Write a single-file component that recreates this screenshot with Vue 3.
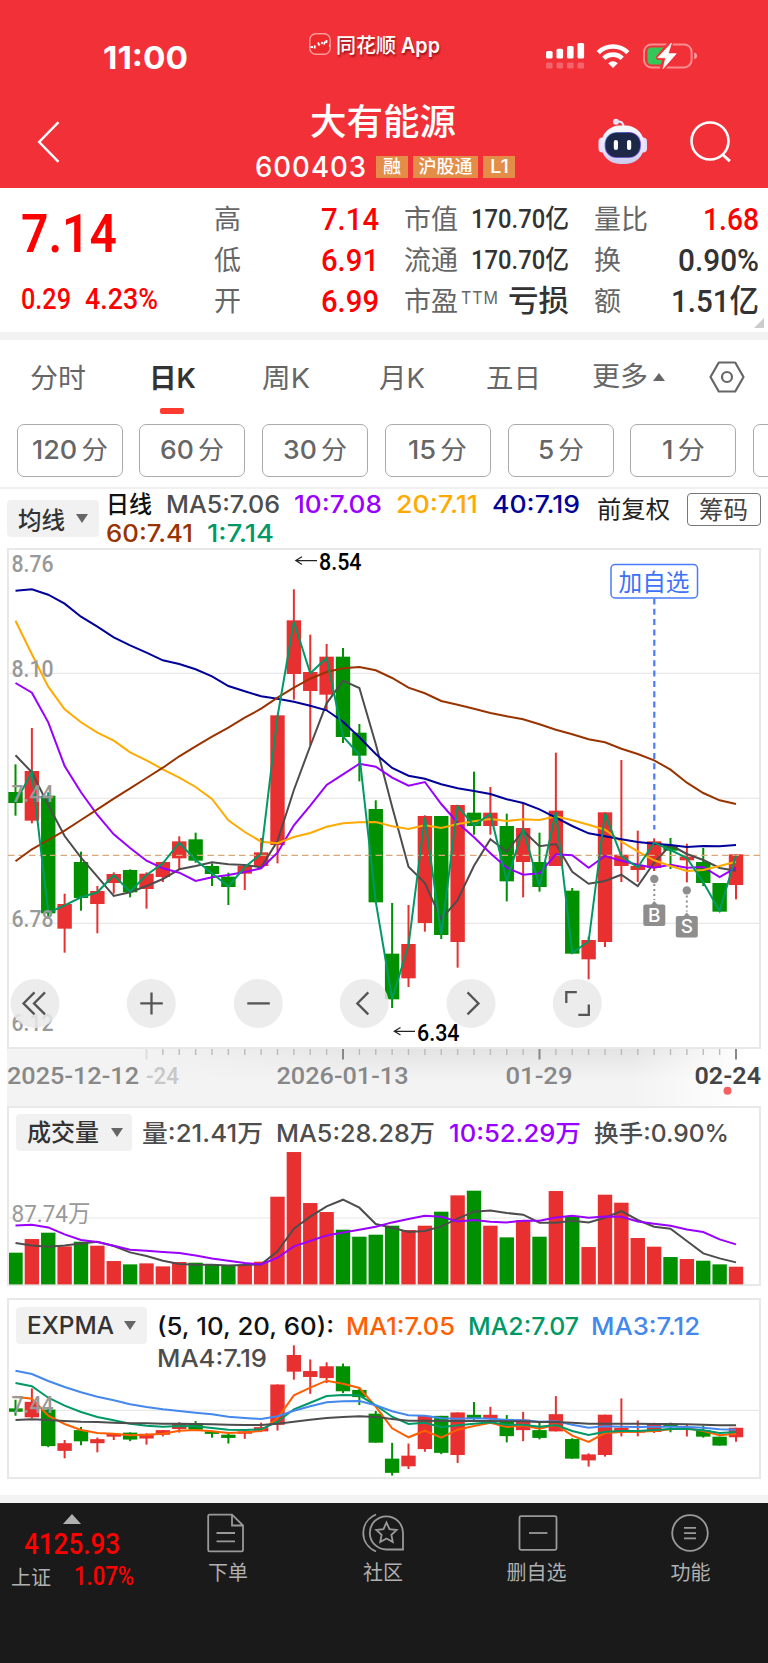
<template>
  <div class="page">
    <!-- 顶部红色区域 -->
    <header class="top">
      <div class="status">
        <span class="time" v-fit="85">11:00</span>
        <div class="app-mark">
          <svg width="22" height="22" viewBox="0 0 22 22">
            <rect x="0.8" y="0.8" width="20.4" height="20.4" rx="6" fill="#ec2a2c" stroke="#ff9a9c" stroke-width="1.4" />
            <path d="M1.5 14h2.5M5.5 15.5l.5-3M9 9.5l1.5 3M12.5 11l1-2M15 11.5l1-3M17.5 7v3M20 12.5h1" stroke="#fff" stroke-width="1.8" fill="none" />
          </svg>
          <span class="app-cn" v-fit="60">同花顺</span>
          <span class="app-en" v-fit="39">App</span>
        </div>
        <div class="status-icons">
          <svg width="40" height="28" viewBox="0 0 40 28" fill="#fff">
            <rect x="1" y="9" width="6.6" height="7.5" rx="1.5" />
            <rect x="11.5" y="6.8" width="6.6" height="9.7" rx="1.5" />
            <rect x="22" y="4" width="6.6" height="12.5" rx="1.5" />
            <rect x="32.5" y="1" width="6.6" height="15.5" rx="1.5" />
            <g opacity="0.25">
              <rect x="1" y="20.5" width="6.6" height="6" rx="1.5" />
              <rect x="11.5" y="20.5" width="6.6" height="6" rx="1.5" />
              <rect x="22" y="20.5" width="6.6" height="6" rx="1.5" />
              <rect x="32.5" y="20.5" width="6.6" height="6" rx="1.5" />
            </g>
          </svg>
          <svg class="wifi" width="34" height="26" viewBox="0 0 34 26" fill="none" stroke="#fff" stroke-width="4.6">
            <path d="M2.2 9.6a21 21 0 0 1 29.6 0" />
            <path d="M7.8 15.4a13 13 0 0 1 18.4 0" />
            <path d="M12.2 20.2a6.8 6.8 0 0 1 9.6 0L17 25z" fill="#fff" stroke="none" />
          </svg>
          <svg class="battery" width="56" height="28" viewBox="0 0 56 28">
            <rect x="1" y="2.4" width="47.6" height="23" rx="7.5" fill="none" stroke="#fff" stroke-opacity="0.45" stroke-width="2" />
            <path d="M51.2 10.6q3 1 3 3.3t-3 3.3z" fill="#fff" fill-opacity="0.5" />
            <path d="M8.5 5.4H21v17H8.5q-4 0-4-4v-9q0-4 4-4z" fill="#34c759" />
            <path d="M27.5 1L15.5 15.5h7L19.5 26.5 33 11.5h-7.5z" fill="#fff" stroke="#f23038" stroke-width="5" stroke-linejoin="round" />
            <path d="M28.3 1.2L14.8 15.7h8L20 26.7 33.2 11.7h-8z" fill="#fff" stroke="#fff" stroke-width="0.8" stroke-linejoin="round" />
          </svg>
        </div>
      </div>
      <div class="nav">
        <svg class="back" width="24" height="42" viewBox="0 0 24 42" fill="none" stroke="#fff" stroke-width="2.4">
          <path d="M21.5 1.2L2.2 21l19.3 19.8" />
        </svg>
        <div class="title">
          <h1 v-fit="146">大有能源</h1>
          <div class="code">
            <span class="num" v-fit="112">600403</span>
            <i class="tag"><b v-fit="18">融</b></i>
            <i class="tag wide"><b v-fit="54">沪股通</b></i>
            <i class="tag"><b v-fit="19">L1</b></i>
          </div>
        </div>
        <div class="nav-right">
          <svg width="50" height="48" viewBox="0 0 50 48">
            <defs>
              <linearGradient id="shell" x1="0" y1="0" x2="0" y2="1">
                <stop offset="0" stop-color="#fafaff" />
                <stop offset="0.6" stop-color="#e6e6fa" />
                <stop offset="1" stop-color="#c9c9ee" />
              </linearGradient>
              <linearGradient id="rim" x1="0" y1="0" x2="1" y2="1">
                <stop offset="0" stop-color="#58c8e8" />
                <stop offset="0.4" stop-color="#7d3fe0" />
                <stop offset="1" stop-color="#8a7cf0" />
              </linearGradient>
            </defs>
            <path d="M18.5 3.6q7-1.2 7 5.5" fill="none" stroke="#e9e7fa" stroke-width="2" />
            <circle cx="18" cy="3.8" r="3" fill="#e4e2f8" />
            <rect x="0.5" y="19.5" width="8" height="15" rx="4" fill="#e2e0f8" />
            <rect x="41" y="19.5" width="8" height="15" rx="4" fill="#e2e0f8" />
            <rect x="3.2" y="7.5" width="43" height="38.500" rx="18.5" fill="url(#shell)" />
            <rect x="6.6" y="14" width="36.400" height="26" rx="12" fill="url(#rim)" />
            <rect x="7.5" y="14.8" width="34.600" height="24.500" rx="11.3" fill="#1d2748" />
            <rect x="15.800" y="22" width="4.200" height="10" rx="2" fill="#fff" />
            <rect x="29" y="22" width="4.200" height="10" rx="2" fill="#fff" />
          </svg>
          <svg width="42" height="42" viewBox="0 0 42 42" fill="none" stroke="#fff" stroke-width="2.6">
            <circle cx="20" cy="20" r="18.5" />
            <path d="M32.5 33.5l7.300 6.700" stroke-width="3" />
          </svg>
        </div>
      </div>
    </header>

    <!-- 行情数据 -->
    <section class="quote">
      <div class="main">
        <div class="price"><span v-fit="96">7.14</span></div>
        <div class="change"><span v-fit="50">0.29</span><span v-fit="73">4.23%</span></div>
      </div>
      <div class="col" v-for="(col, c) in stats" :key="c">
        <div class="stat" v-for="s in col" :key="s.k">
          <span class="k">{{ s.k }}<sup v-if="s.sup" v-fit="38">{{ s.sup }}</sup></span>
          <span class="v" :class="s.cls" v-fit="s.w">{{ s.v }}</span>
        </div>
      </div>
      <i class="corner"></i>
    </section>

    <!-- 周期 -->
    <nav class="tabs">
      <span v-for="t in tabs" :key="t.n" :class="{ on: t.on }"><b v-fit="t.w">{{ t.n }}</b></span>
      <span class="more"><b v-fit="56">更多</b><i></i></span>
      <svg width="36" height="32" viewBox="0 0 36 32" fill="none" stroke="#666" stroke-width="2.2">
        <path d="M9.800 1.500h16.400L34.500 16l-8.300 14.500H9.800L1.500 16z" stroke-linejoin="round" />
        <circle cx="18" cy="16" r="5" />
      </svg>
    </nav>
    <div class="minutes">
      <button v-for="m in minutes" :key="m.n"><span v-fit="m.w">{{ m.n }}<em>分</em></span></button>
      <button></button>
    </div>

    <!-- 均线图例 -->
    <div class="legend">
      <div class="pill"><span v-fit="47">均线</span><i></i></div>
      <div class="ma">
        <div>
          <span v-for="m in maRow1" :key="m.t" :style="{ color: m.c }" v-fit="m.w">{{ m.t }}</span>
        </div>
        <div>
          <span v-for="m in maRow2" :key="m.t" :style="{ color: m.c }" v-fit="m.w">{{ m.t }}</span>
        </div>
      </div>
      <span class="adjust" v-fit="73">前复权</span>
      <button class="chips">筹码</button>
    </div>

    <!-- K线主图 -->
    <svg class="chart" width="768" height="501" viewBox="0 0 768 501">
      <rect class="frame" x="8" y="1" width="752" height="499" />
      <path class="grid" d="M8 125.400H760M8 250.400H760M8 375.400H760" />
      <g v-for="(k, i) in candles" :key="i" :fill="k.color">
        <rect :x="x(i) - 1" :y="py(k.h)" width="2" :height="(k.l - k.h) / 3" />
        <rect :x="x(i) - 7.2" :y="py(k.t)" width="14.4" :height="(k.b - k.t) / 3" />
      </g>
      <path class="last" d="M8 307.400H760" />
      <polyline v-for="l in kLines" :key="l.color" class="line" :stroke="l.color" :points="points(l.data, py)" />
      <text v-for="t in axis" :key="t.v" class="scale" x="11.5" :y="t.y" textLength="42" lengthAdjust="spacingAndGlyphs">{{ t.v }}</text>

      <g class="mark">
        <path d="M317 12.600H296M302 8.800L295.800 12.600 302 16.400" />
        <text x="319" y="22.2" textLength="42.5" lengthAdjust="spacingAndGlyphs">8.54</text>
        <path d="M415 483.300H394.500M400.500 479.500L394.300 483.300 400.500 487.100" />
        <text x="417" y="492.500" textLength="42.5" lengthAdjust="spacingAndGlyphs">6.34</text>
      </g>

      <g class="fav">
        <rect x="611" y="16.5" width="86.500" height="33.500" rx="4" />
        <text x="618.5" y="43" textLength="71" lengthAdjust="spacingAndGlyphs">加自选</text>
        <path d="M654.300 50.500V281.500" />
      </g>
      <g v-for="d in deals" :key="d.n" class="deal" :transform="`translate(${d.x} ${d.y})`">
        <circle r="4.2" />
        <path class="dots" d="M0 5V21" />
        <path d="M-3.500 26L0 22 3.500 26z" />
        <rect x="-11" y="25.500" width="22" height="21.500" rx="2" />
        <text y="43">{{ d.n }}</text>
      </g>

      <g v-for="b in tools" :key="b.x" :transform="`translate(${b.x} 455.400)`">
        <circle r="24.5" fill="#e9e9e9" fill-opacity="0.85" />
        <path class="glyph" :d="b.d" />
      </g>
    </svg>

    <!-- 时间轴 -->
    <svg class="dates" width="768" height="57" viewBox="0 0 768 57">
      <defs>
        <linearGradient id="shade" x1="0" y1="0" x2="0" y2="1">
          <stop offset="0" stop-color="#e4e4e4" />
          <stop offset="0.55" stop-color="#f3f3f3" />
        </linearGradient>
        <linearGradient id="fadeL" x1="0" x2="1">
          <stop offset="0.17" stop-color="#f3f3f3" />
          <stop offset="0.5" stop-color="#f3f3f3" stop-opacity="0" />
        </linearGradient>
        <linearGradient id="fadeR" x1="0" x2="1">
          <stop offset="0.82" stop-color="#fff" stop-opacity="0" />
          <stop offset="0.97" stop-color="#fff" />
        </linearGradient>
      </defs>
      <rect x="7" width="754" height="57" fill="url(#shade)" />
      <rect x="7" width="754" height="57" fill="url(#fadeL)" />
      <rect x="7" width="761" height="57" fill="url(#fadeR)" />
      <g v-for="i in ticks" :key="i">
        <rect
          :x="x(i) - (i % 12 === 8 ? 1 : 0.7)"
          :width="i % 12 === 8 ? 2 : 1.4"
          :height="i % 12 === 8 ? 10.5 : 6"
          :fill="i === 8 ? '#ddd' : i % 12 === 8 ? '#888' : '#bbb'"
        />
      </g>
      <text v-for="d in dates" :key="d.v" :class="d.cls" :x="d.x" y="35.2" :textLength="d.w" lengthAdjust="spacingAndGlyphs">{{ d.v }}</text>
      <circle cx="727.5" cy="41.7" r="4" fill="#f55f5f" />
    </svg>

    <!-- 成交量 -->
    <section class="panel volume">
      <div class="head">
        <div class="pill"><span v-fit="72">成交量</span><i></i></div>
        <span v-for="m in volHead" :key="m.t" :style="{ color: m.c }" v-fit="m.w">{{ m.t }}</span>
      </div>
      <svg width="750" height="134" viewBox="9 0 750 134">
        <path class="grid" d="M8 67H760" />
        <text class="scale" x="11.5" y="70.500" textLength="79" lengthAdjust="spacingAndGlyphs">87.74万</text>
        <rect v-for="(k, i) in candles" :key="i" :x="x(i) - 7.2" :y="vy(volumes[i])" width="14.4" :height="(434 - volumes[i]) / 3" :fill="k.color" />
        <polyline v-for="l in vLines" :key="l.color" class="line" :stroke="l.color" :points="points(l.data, vy)" />
      </svg>
    </section>

    <!-- EXPMA -->
    <section class="panel expma">
      <div class="head">
        <div class="pill"><span v-fit="87">EXPMA</span><i></i></div>
        <span v-for="m in expHead" :key="m.t" :style="{ color: m.c }" v-fit="m.w">{{ m.t }}</span>
      </div>
      <div class="head second"><span v-fit="110">MA4:7.19</span></div>
      <svg width="750" height="132" viewBox="9 0 750 132">
        <path class="grid" d="M8 65.400H760" />
        <g v-for="(k, i) in candles" :key="i" :fill="k.color">
          <rect :x="x(i) - 1" :y="ey(small(k.h))" width="2" :height="(k.l - k.h) * 0.1037" />
          <rect :x="x(i) - 7.2" :y="ey(small(k.t))" width="14.4" :height="(k.b - k.t) * 0.1037" />
        </g>
        <polyline v-for="l in eLines" :key="l.color" class="line" :stroke="l.color" :points="points(l.data, ey)" />
        <text class="scale" x="11.5" y="68.300" textLength="42" lengthAdjust="spacingAndGlyphs">7.44</text>
      </svg>
    </section>

    <!-- 底部栏 -->
    <footer class="bar">
      <div class="index">
        <i></i>
        <div class="pt"><span v-fit="96">4125.93</span></div>
        <div class="row"><span class="nm">上证</span><span class="pc" v-fit="60">1.07%</span></div>
      </div>
      <div class="item order">
        <svg width="40" height="40" viewBox="0 0 40 40">
          <path d="M3.500 1.700H26L37 12.500V37q0 1.300-1.300 1.300H3.500q-1.300 0-1.300-1.300V3q0-1.300 1.300-1.300zM26 1.700V12.500H37M10.500 20H29M10.500 28.300H29" />
        </svg>
        <span>下单</span>
      </div>
      <div class="item">
        <svg width="42" height="40" viewBox="0 0 42 40">
          <path d="M14 1.500C-3 9-3 31 14 38.500" />
          <path d="M41 36.500H24.500a16.600 16.600 0 1 1 16.500-16.700z" />
          <path d="M24.500 9.500l3 6.700 7.200.8-5.300 4.900 1.400 7.100-6.300-3.500-6.300 3.500 1.400-7.100-5.300-4.900 7.200-.8z" />
        </svg>
        <span>社区</span>
      </div>
      <div class="item remove">
        <svg width="42" height="40" viewBox="0 0 42 40">
          <rect x="2.5" y="3.2" width="37" height="33.600" rx="1.5" />
          <path d="M12 20H30.500" />
        </svg>
        <span>删自选</span>
      </div>
      <div class="item">
        <svg width="40" height="40" viewBox="0 0 40 40">
          <circle cx="20" cy="20" r="17.800" />
          <path d="M14 14.800H26M14 20.200H26M14 25.300H26" />
        </svg>
        <span>功能</span>
      </div>
    </footer>
  </div>
</template>

<script setup>
// 把文字横向压到指定宽度，并保持占位宽度一致
const vFit = {
  mounted(el, { value }) {
    const w = el.getBoundingClientRect().width
    el.style.transform = `scaleX(${value / w})`
    el.style.marginRight = `${value - w}px`
  },
}

const stats = [
  [
    { k: '高', v: '7.14', w: 58, cls: 'up' },
    { k: '低', v: '6.91', w: 58, cls: 'up' },
    { k: '开', v: '6.99', w: 58, cls: 'up' },
  ],
  [
    { k: '市值', v: '170.70亿', w: 98, cls: 'sm' },
    { k: '流通', v: '170.70亿', w: 98, cls: 'sm' },
    { k: '市盈', sup: 'TTM', v: '亏损', w: 61, cls: 'cn' },
  ],
  [
    { k: '量比', v: '1.68', w: 56, cls: 'up' },
    { k: '换', v: '0.90%', w: 81, cls: '' },
    { k: '额', v: '1.51亿', w: 88, cls: '' },
  ],
]

const tabs = [
  { n: '分时', w: 56 },
  { n: '日K', w: 47, on: true },
  { n: '周K', w: 48 },
  { n: '月K', w: 46 },
  { n: '五日', w: 55 },
]

const minutes = [
  { n: '120', w: 76 },
  { n: '60', w: 64 },
  { n: '30', w: 64 },
  { n: '15', w: 59 },
  { n: '5', w: 46 },
  { n: '1', w: 43 },
]

const GRAY = '#4d4d4d'
const PURPLE = '#9900ff'
const ORANGE = '#ffaa00'
const NAVY = '#000099'
const BROWN = '#993300'
const TEAL = '#009966'

const maRow1 = [
  { t: '日线', c: '#111', w: 46 },
  { t: 'MA5:7.06', c: GRAY, w: 114 },
  { t: '10:7.08', c: PURPLE, w: 88 },
  { t: '20:7.11', c: ORANGE, w: 82 },
  { t: '40:7.19', c: NAVY, w: 88 },
]
const maRow2 = [
  { t: '60:7.41', c: BROWN, w: 87 },
  { t: '1:7.14', c: TEAL, w: 67 },
]
const volHead = [
  { t: '量:21.41万', c: GRAY, w: 121 },
  { t: 'MA5:28.28万', c: GRAY, w: 159 },
  { t: '10:52.29万', c: PURPLE, w: 132 },
  { t: '换手:0.90%', c: GRAY, w: 135 },
]
const expHead = [
  { t: '(5, 10, 20, 60):', c: '#111', w: 177 },
  { t: 'MA1:7.05', c: '#ff5f00', w: 109 },
  { t: 'MA2:7.07', c: TEAL, w: 111 },
  { t: 'MA3:7.12', c: '#4488ee', w: 109 },
]

// 纵向数据以 1/3 像素为单位
const x = (i) => 15.5 + i * 16.375
const py = (v) => v / 3 - 8
const vy = (v) => v / 3 - 11.3
const ey = (v) => v / 3 - 205
const small = (v) => 811 + (v - 775) * 0.311
const points = (data, fn) => data.map((v, i) => `${x(i)},${fn(v).toFixed(1)}`).join(' ')

// [方向, 最高, 实体上沿, 实体下沿, 最低]
const candles = [
  [0, 673, 756, 789, 827], [1, 564, 693, 842, 850], [0, 757, 767, 1120, 1130],
  [1, 1061, 1092, 1166, 1238], [0, 935, 966, 1074, 1112], [1, 1038, 1053, 1092, 1180],
  [1, 997, 1002, 1029, 1061], [0, 988, 990, 1057, 1072], [1, 997, 1001, 1047, 1106],
  [1, 965, 966, 1011, 1026], [1, 889, 904, 955, 990], [0, 878, 898, 962, 968],
  [0, 970, 978, 1002, 1038], [0, 998, 1010, 1041, 1095], [1, 975, 978, 1001, 1050],
  [1, 894, 937, 978, 985], [1, 525, 526, 915, 970], [1, 148, 241, 402, 479],
  [1, 284, 396, 453, 616], [1, 312, 350, 464, 512], [0, 324, 350, 591, 609],
  [0, 552, 578, 647, 724], [0, 781, 807, 1087, 1087], [0, 1089, 1241, 1378, 1404],
  [1, 1095, 1212, 1315, 1341], [1, 826, 828, 1149, 1175], [0, 828, 828, 1185, 1197],
  [1, 795, 795, 1206, 1283], [0, 695, 818, 858, 884], [1, 741, 818, 858, 884],
  [0, 821, 858, 1024, 1084], [1, 790, 864, 966, 1072], [0, 878, 966, 1041, 1055],
  [1, 638, 812, 978, 978], [0, 1044, 1052, 1241, 1241], [1, 1190, 1200, 1258, 1318],
  [1, 817, 817, 1206, 1221], [1, 660, 944, 978, 1026], [1, 872, 978, 990, 1026],
  [1, 895, 904, 984, 993], [0, 894, 915, 932, 987], [1, 911, 950, 961, 1027],
  [0, 924, 966, 1029, 1038], [0, 1029, 1029, 1115, 1115], [1, 943, 943, 1035, 1078],
].map(([up, h, t, b, l]) => ({ up, h, t, b, l, color: up ? '#e83030' : '#009000' }))

const kLines = [
  { color: GRAY, data: [646, 697, 795, 888, 953, 1010, 1068, 1057, 1038, 1017, 988, 978, 967, 973, 975, 982, 903, 750, 618, 490, 422, 444, 612, 800, 980, 1029, 1138, 1080, 977, 898, 935, 872, 919, 912, 995, 1031, 1023, 1004, 1038, 968, 915, 942, 960, 984, 992] },
  { color: PURPLE, data: [429, 458, 547, 678, 757, 825, 883, 924, 962, 985, 998, 1023, 1012, 1005, 996, 985, 938, 856, 797, 735, 703, 671, 680, 713, 737, 726, 792, 848, 892, 940, 983, 1004, 1000, 943, 946, 983, 948, 962, 974, 983, 974, 983, 981, 1011, 983] },
  { color: ORANGE, data: [242, 343, 440, 508, 547, 578, 602, 637, 661, 688, 713, 741, 777, 841, 876, 905, 910, 891, 879, 860, 850, 847, 846, 859, 867, 856, 864, 852, 844, 837, 843, 838, 840, 829, 841, 854, 869, 905, 934, 961, 978, 993, 990, 978, 965] },
  { color: NAVY, data: [152, 148, 164, 191, 230, 260, 292, 316, 338, 361, 372, 388, 409, 438, 454, 469, 476, 485, 497, 511, 545, 592, 642, 684, 707, 716, 733, 745, 753, 762, 778, 789, 808, 833, 858, 880, 889, 898, 906, 911, 915, 921, 918, 919, 915] },
  { color: BROWN, data: [964, 928, 900, 872, 840, 808, 776, 745, 714, 683, 649, 619, 590, 563, 533, 506, 473, 443, 416, 396, 385, 381, 391, 414, 443, 460, 483, 494, 506, 519, 529, 538, 553, 569, 583, 598, 607, 626, 642, 661, 689, 728, 759, 781, 792] },
  { color: TEAL, data: candles.map((k) => (k.up ? k.t + 4 : k.b - 2)) },
]

const volumes = [339, 298, 279, 320, 306, 318, 364, 374, 371, 380, 367, 369, 375, 379, 375, 366, 171, 37, 190, 217, 270, 291, 285, 258, 271, 258, 216, 167, 153, 258, 293, 241, 291, 154, 230, 322, 165, 189, 295, 321, 352, 358, 363, 374, 381]
const vLines = [
  { color: GRAY, data: [310, 317, 321, 317, 311, 306, 319, 338, 349, 363, 373, 375, 375, 377, 376, 374, 335, 267, 231, 200, 180, 204, 253, 264, 277, 274, 260, 237, 216, 212, 220, 225, 249, 249, 243, 248, 234, 214, 241, 261, 267, 304, 341, 356, 368] },
  { color: PURPLE, data: [257, 255, 263, 284, 301, 307, 318, 330, 333, 337, 340, 347, 356, 363, 370, 374, 354, 320, 304, 287, 278, 270, 261, 248, 238, 228, 231, 245, 241, 246, 248, 243, 243, 233, 228, 234, 230, 231, 245, 252, 258, 269, 277, 299, 314] },
]

const eLines = [
  { color: '#ff5f00', data: [770, 776, 827, 852, 870, 879, 881, 886, 884, 881, 872, 870, 874, 879, 877, 873, 835, 766, 743, 722, 731, 744, 800, 865, 892, 872, 893, 869, 858, 848, 861, 856, 866, 854, 887, 906, 879, 876, 875, 873, 868, 865, 873, 886, 881] },
  { color: TEAL, data: [729, 739, 773, 797, 816, 831, 841, 851, 857, 860, 858, 859, 864, 869, 870, 868, 845, 808, 788, 768, 765, 766, 796, 830, 852, 848, 862, 856, 851, 847, 854, 854, 860, 855, 873, 885, 875, 873, 873, 870, 867, 867, 871, 879, 876] },
  { color: '#4488ee', data: [692, 702, 723, 741, 757, 770, 781, 793, 801, 808, 813, 818, 823, 830, 834, 837, 829, 812, 799, 787, 784, 783, 796, 814, 826, 827, 835, 836, 835, 836, 840, 841, 845, 844, 854, 863, 859, 860, 861, 860, 860, 861, 863, 868, 869] },
  { color: GRAY, data: [840, 838, 840, 843, 845, 846, 848, 850, 850, 851, 851, 852, 853, 854, 855, 855, 851, 845, 839, 834, 831, 829, 831, 837, 842, 842, 843, 843, 843, 843, 844, 844, 846, 846, 848, 851, 851, 851, 851, 852, 852, 853, 854, 856, 856] },
]

const axis = [
  { v: '8.76', y: 24.3 },
  { v: '8.10', y: 128.6 },
  { v: '7.44', y: 254.2 },
  { v: '6.78', y: 378.8 },
  { v: '6.12', y: 483.4 },
]

const deals = [
  { n: 'B', x: 654.3, y: 331 },
  { n: 'S', x: 686.8, y: 342.4 },
]

const tools = [
  { x: 35, d: 'M-0.500 -11L-11.500 0 -0.500 11M10 -11L-1 0 10 11' },
  { x: 151.3, d: 'M-11 0H11.500M0.200 -11V11' },
  { x: 258.3, d: 'M-11 0H11.500' },
  { x: 364.3, d: 'M4 -11L-7 0 4 11' },
  { x: 471, d: 'M-3.500 -11L7.500 0 -3.500 11' },
  { x: 577.3, d: 'M-0.500 -11.200H-11V-0.500M11.500 1V11.500H1' },
]

const ticks = Array.from({ length: 37 }, (_, i) => i + 8)
const dates = [
  { v: '2025-12-12', x: 7, w: 132 },
  { v: '-24', x: 146, w: 33, cls: 'faint' },
  { v: '2026-01-13', x: 276.5, w: 132 },
  { v: '01-29', x: 505.5, w: 67 },
  { v: '02-24', x: 694.5, w: 66.5, cls: 'now' },
]
</script>

<style>
body {
  margin: 0;
  background: #fff;
}
</style>

<style scoped>
.page {
  width: 768px;
  height: 1663px;
  overflow: hidden;
  display: flex;
  flex-direction: column;
  background: #fff;
  font-family: Inter, "Noto Sans CJK SC", sans-serif;
  color: #333;
}
.page > * { flex-shrink: 0; box-sizing: border-box; }
svg { display: block; flex-shrink: 0; }
span, b, h1, sup { white-space: nowrap; transform-origin: left center; }
b { font-weight: inherit; display: block; }
i, em { font-style: normal; }
button { font: inherit; padding: 0; background: #fff; box-sizing: border-box; }

/* 顶部 */
.top { height: 188px; background: #f23038; color: #fff; }
.status { height: 90px; display: grid; grid-template-columns: 309px 236px 1fr; }
.time {
  justify-self: start;
  margin-left: 103px;
  padding-top: 38px;
  font-size: 31.5px;
  line-height: 40px;
  font-weight: 700;
}
.app-mark {
  height: 22px;
  padding-top: 33px;
  display: flex;
  align-items: center;
  text-shadow: 1px 2px 2px rgba(90, 0, 0, 0.6);
}
.app-cn { margin-left: 5px; padding-top: 4px; font-size: 20px; font-weight: 500; line-height: 24px; }
.app-en { margin-left: 5px; padding-top: 4px; font-size: 21px; font-weight: 600; line-height: 24px; }
.status-icons { display: flex; align-items: flex-start; padding-top: 42px; }
.wifi { margin: 1px 0 0 11px; }
.battery { margin-left: 13px; }
.nav { height: 98px; display: grid; grid-template-columns: 255px 1fr 248px; }
.back { margin: 31px 0 0 37px; }
.title { padding-top: 6px; display: flex; flex-direction: column; align-items: flex-start; }
.title h1 { margin: 0 0 0 55px; font-size: 36px; line-height: 52px; font-weight: 500; }
.code { display: flex; align-items: center; height: 30px; margin-top: 4px; }
.num { font-size: 28.5px; font-weight: 500; letter-spacing: 1px; line-height: 30px; }
.tag {
  display: flex;
  align-items: center;
  justify-content: center;
  width: 32px;
  height: 22.5px;
  margin-left: 5px;
  background: #e38d48;
  font-size: 18px;
  font-weight: 500;
  line-height: 22px;
}
.num + .tag { margin-left: 9px; }
.tag.wide { width: 65px; }
.nav-right { display: flex; align-items: center; gap: 42px; padding: 5px 0 0 78px; }

/* 行情 */
.quote {
  position: relative;
  height: 152px;
  border-bottom: 8px solid #f3f3f3;
  display: flex;
  gap: 25px;
}
.main { width: 168px; padding-left: 21px; color: #f00; font-family: Roboto, sans-serif; }
.price { display: flex; margin-top: 14px; font-size: 54px; line-height: 64px; font-weight: 600; }
.change { display: flex; gap: 14px; margin-top: 16px; font-size: 29px; line-height: 34px; font-weight: 500; }
.col { width: 165px; padding-top: 10px; }
.stat { height: 41px; display: flex; align-items: center; justify-content: space-between; }
.k { display: flex; align-items: center; padding-top: 1px; font-size: 27px; line-height: 41px; color: #666; }
.k sup { margin-left: 3px; font-size: 17px; line-height: 20px; padding-bottom: 6px; letter-spacing: 1px; vertical-align: baseline; }
.v { font-family: Roboto, "Noto Sans CJK SC", sans-serif; font-size: 32px; line-height: 38px; font-weight: 500; color: #333; }
.v.up { color: #f00; }
.v.sm { font-size: 26px; }
.v.cn { font-size: 30px; }
.corner {
  position: absolute;
  right: 4px;
  bottom: 4px;
  border-left: 10px solid transparent;
  border-bottom: 10px solid #ccc;
}

/* 周期 */
.tabs {
  height: 84px;
  display: grid;
  grid-template-columns: 115px 115px 112px 119px 131px 117px 36px;
  align-items: start;
  font-size: 27px;
  color: #666;
}
.tabs span { height: 74px; display: flex; justify-content: center; line-height: 78px; position: relative; }
.tabs span:nth-child(5) { padding-right: 27px; }
.tabs .on { color: #333; font-weight: 600; }
.tabs .on::after {
  content: '';
  position: absolute;
  left: 45px;
  bottom: 0;
  width: 24px;
  height: 6px;
  border-radius: 2px;
  background: #ff3b30;
}
.tabs .more { justify-content: flex-start; align-items: center; }
.more i { margin-left: 5px; border: 6.5px solid transparent; border-top: 0; border-bottom: 8px solid #666; }
.tabs svg { margin-top: 21px; }
.minutes { height: 65px; display: flex; gap: 16.8px; padding-left: 16.5px; overflow: hidden; border-bottom: 2px solid #f0f0f0; }
.minutes button {
  flex: 0 0 106px;
  height: 53px;
  border: 1.5px solid #aaa;
  border-radius: 7px;
  color: #666;
  font-size: 25.5px;
  line-height: 30px;
  font-weight: 500;
  display: flex;
  align-items: center;
  justify-content: center;
  padding-bottom: 2px;
}
.minutes em { font-size: 25px; margin-left: 4px; font-weight: 400; }

/* 图例 */
.legend { height: 59px; display: flex; padding-left: 7px; }
.pill {
  height: 37px;
  display: flex;
  align-items: center;
  padding-left: 11px;
  background: #f1f1f1;
  border-radius: 4px;
  font-size: 24px;
  font-weight: 500;
  color: #333;
  box-sizing: border-box;
}
.pill i { margin-left: 11px; border: 6px solid transparent; border-bottom: 0; border-top: 9px solid #666; }
.legend .pill { width: 92px; margin-top: 11px; }
.ma { width: 472px; margin-left: 7px; padding-top: 1px; font-size: 24px; font-weight: 500; }
.ma div { display: flex; gap: 14px; height: 29px; align-items: center; line-height: 29px; }
.adjust { align-self: flex-start; margin: 5px 0 0 19px; font-size: 24px; line-height: 32px; color: #222; }
.chips {
  width: 74px;
  height: 33px;
  margin: 4px 0 0 16.5px;
  border: 1.5px solid #777;
  border-radius: 4px;
  font-size: 24.5px;
  line-height: 28px;
  color: #444;
}

/* 图表 */
.frame { fill: none; stroke: #e8e8e8; stroke-width: 2; }
.grid { fill: none; stroke: #e8e8e8; stroke-width: 1.2; }
.last { stroke: #d8a878; stroke-width: 1.2; stroke-dasharray: 6.5 4; }
.line { fill: none; stroke-width: 2; }
.scale { font: 500 23.5px Roboto, "Noto Sans CJK SC", sans-serif; fill: #999; }
.volume .scale { font-weight: 400; }
.mark path { fill: none; stroke: #222; stroke-width: 1.2; }
.mark text { font: 500 24px Roboto, sans-serif; fill: #000; }
.fav rect { fill: #fff; stroke: #4a7cfa; stroke-width: 1.5; }
.fav text { font-size: 24px; fill: #3d72f8; }
.fav path { stroke: #4a7cfa; stroke-width: 2.2; stroke-dasharray: 6 4.3; }
.deal { fill: #8e8e8e; }
.deal .dots { stroke: #8e8e8e; stroke-width: 2; stroke-dasharray: 2 3; }
.deal text { font-size: 19px; font-weight: 500; fill: #fff; text-anchor: middle; }
.glyph { fill: none; stroke: #555; stroke-width: 2.3; }
.dates text { font: 500 23.5px Roboto, sans-serif; fill: #888; }
.dates .faint { fill: #c8c8c8; }
.dates .now { fill: #444; font-weight: 600; }

.panel { margin: 0 7px; border: 2px solid #e8e8e8; }
.volume { height: 180px; }
.expma { height: 181px; margin-top: 12px; }
.head { display: flex; align-items: center; height: 49px; padding-left: 7px; gap: 14px; font-size: 24px; font-weight: 500; color: #4d4d4d; }
.head span { line-height: 32px; }
.head > span { padding-top: 2px; }
.volume .pill { width: 116px; margin-right: -4px; }
.volume .pill i { margin-left: 12px; }
.volume .head { gap: 13.5px; }
.expma .pill { width: 131px; margin-right: -3px; }
.expma .pill i { margin-left: 10px; }
.volume > svg { margin-top: -6px; }
.expma .head { height: 51px; gap: 12.5px; }
.expma .head.second { height: 20px; padding-left: 148px; margin-top: -3px; }
.expma > svg { margin-top: -23px; }

/* 底部 */
.bar {
  height: 168px;
  margin-top: 16px;
  border-top: 8px solid #f3f3f3;
  background: #1a1a1a;
  display: grid;
  grid-template-columns: 150px 155px 155px 152px 156px;
  align-items: start;
}
.index { font-family: Roboto, "Noto Sans CJK SC", sans-serif; color: #f00; display: flex; flex-direction: column; }
.index i { width: 0; margin: 11px 0 0 63px; border: 9px solid transparent; border-top: 0; border-bottom: 10.5px solid #b0b0b0; }
.pt { display: flex; padding: 4px 0 0 24px; font-size: 29px; line-height: 32px; font-weight: 500; }
.row { display: flex; align-items: center; height: 30px; margin-top: 1px; padding-left: 11px; }
.nm { width: 63px; font-size: 20px; color: #b0b0b0; }
.pc { font-size: 25px; font-weight: 500; }
.item { display: flex; flex-direction: column; align-items: center; padding-top: 10px; color: #b0b0b0; font-size: 20px; line-height: 26px; }
.item svg { fill: none; stroke: #999; stroke-width: 1.8; margin-bottom: 7px; }
.item span { padding-left: 1px; }
.order svg { margin-right: 4px; }
.remove svg { margin-left: 4px; }
</style>
